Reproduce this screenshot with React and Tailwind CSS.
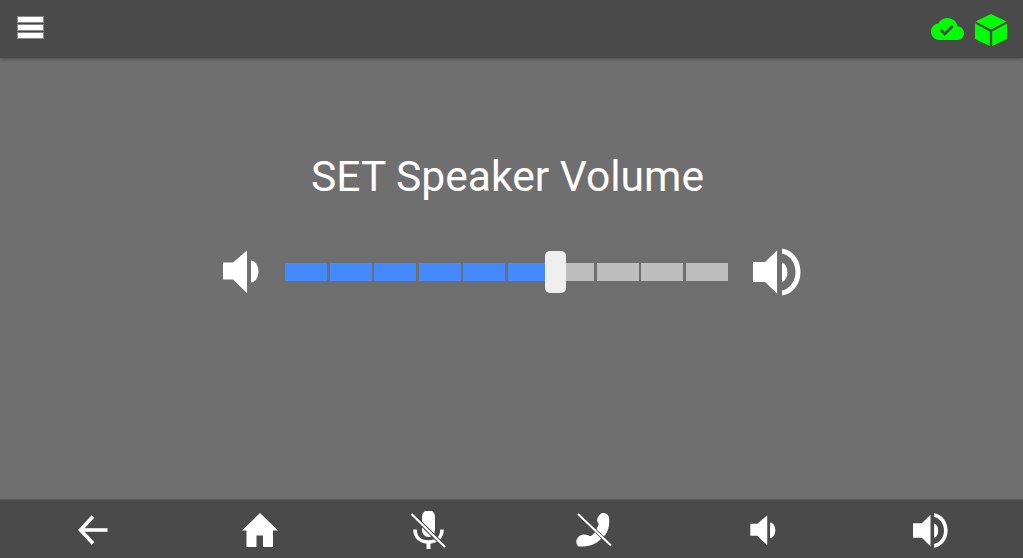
const Speaker = ({ className }) => (
  <svg viewBox="0 0 36 44" className={className} fill="white">
    <path d="M0 12.5H10L24 0.5V43L10 29.5H0Z" />
    <path d="M28 10.5A7.5 11 0 0 1 28 32.5Z" />
  </svg>
);

const SpeakerLoud = ({ className }) => (
  <svg viewBox="0 0 48 48" className={className} fill="white">
    <path d="M0 14H12L24 2.5V45.5L12 34H0Z" />
    <path d="M29 14.5A7 10 0 0 1 29 34Z" />
    <path d="M29 0.5C40 2 47.5 12 47.5 24S40 46 29 47.5V42.5C37 41 42.5 33 42.5 24S37 7 29 5.5Z" />
  </svg>
);

const Arrow = () => (
  <svg viewBox="0 0 30 30" className="w-[30px] h-[30px]" fill="none" stroke="white" strokeWidth="3.6">
    <path d="M29.5 15H3" />
    <path d="M15 1.5L2.5 15L15 28.5" />
  </svg>
);

const Home = () => (
  <svg viewBox="0 0 36 34" className="w-[36px] h-[34px]" fill="white">
    <path d="M18 0L36 17.5H31V34H21V22.5H14.5V34H4.5V17.5H0Z" />
  </svg>
);

const MicOff = () => (
  <svg viewBox="0 0 36 38" className="w-[36px] h-[38px]" fill="none">
    <rect x="12" y="-1" width="13" height="27" rx="6.5" fill="white" />
    <path d="M5 18.5C5 26.5 10.5 31 18.5 31S32 26.5 32 18.5" stroke="white" strokeWidth="3.6" />
    <path d="M16.5 30H20.5V38H16.5Z" fill="white" />
    <path d="M1.5 3L35 36" stroke="#4a4a4a" strokeWidth="4.2" />
    <path d="M1.5 3L35 36" stroke="white" strokeWidth="2.2" />
  </svg>
);

const PhoneOff = () => (
  <svg viewBox="0 0 36 36" className="w-[36px] h-[36px]" fill="none">
    <path
      fill="white"
      d="M27 1C30 1 33 3 33 6C34 14 32 22 25 27C20 32 14 34 8 34.5L3 34.5C1 34 0 31 0.5 28C1.5 25 4 23 7 22.5L12 23C13 24 14 24 15 24C18 22 20 19 21.5 15C22 13 23 12.5 22.5 11.5C21 10 21 8 21.5 6C23 3 25 1 27 1Z"
    />
    <path d="M2 2L35 33.5" stroke="#4a4a4a" strokeWidth="3.6" />
    <path d="M2 2L35 33.5" stroke="white" strokeWidth="2" />
  </svg>
);

const Cloud = () => (
  <svg viewBox="0 4 24 16" className="w-[33px] h-[22px]" fill="#00ff00">
    <path d="M19.35 10.04C18.67 6.59 15.64 4 12 4 9.11 4 6.6 5.64 5.35 8.04 2.34 8.36 0 10.91 0 14c0 3.31 2.69 6 6 6h13c2.76 0 5-2.24 5-5 0-2.64-2.05-4.78-4.65-4.96zM10 17l-3.5-3.5 1.41-1.41L10 14.17 15.18 9l1.41 1.41L10 17z" />
  </svg>
);

const Cube = () => (
  <svg viewBox="0 0 32 32" className="w-[32px] h-[32px]" fill="#00ff00">
    <path d="M16 0L31.5 7.5L16 15.5L0.5 7.5Z" />
    <path d="M0 9.5L14.8 17.5V32L0 25Z" />
    <path d="M32 9.5L17.2 17.5V32L32 25Z" />
  </svg>
);

const segments = [true, true, true, true, true, true, false, false, false, false];

export default function App() {
  return (
    <div className="flex h-[558px] w-[1023px] flex-col overflow-hidden bg-[#6f6f6f] font-['Roboto',sans-serif] text-white">
      <header className="z-10 flex h-[58px] shrink-0 items-start justify-between bg-[#4a4a4a] pl-[18px] pr-[16px] shadow-[0_1px_3px_rgba(0,0,0,0.3)]">
        <div className="mt-[17px] flex w-[25px] flex-col gap-[3px]">
          <div className="h-[5px] bg-white ring-1 ring-[#8a8a8a]" />
          <div className="h-[5px] bg-white ring-1 ring-[#8a8a8a]" />
          <div className="h-[5px] bg-white ring-1 ring-[#8a8a8a]" />
        </div>
        <div className="mt-[14px] flex items-center gap-[11px]">
          <div className="mt-[-2px]"><Cloud /></div>
          <Cube />
        </div>
      </header>

      <main className="flex flex-1 flex-col">
        <h1 className="mt-[92px] pr-[8px] text-center text-[42.6px] font-normal leading-[52px]">SET Speaker Volume</h1>
        <div className="ml-[223px] mt-[46px] flex items-center">
          <Speaker className="h-[44px] w-[36px]" />
          <div className="relative ml-[26px] flex h-[18px] w-[443px] gap-[2.5px]">
            {segments.map((on, i) => (
              <div key={i} className={on ? "h-full flex-1 bg-[#4589ff]" : "h-full flex-1 bg-[#bdbdbd]"} />
            ))}
            <div className="absolute left-[260px] top-[-12px] h-[42px] w-[21px] rounded-[5px] bg-[#efefef]" />
          </div>
          <SpeakerLoud className="ml-[25px] h-[48px] w-[48px]" />
        </div>
      </main>

      <footer className="grid h-[58px] shrink-0 grid-cols-6 items-center bg-[#4a4a4a] px-[9px] pt-[2px] shadow-[0_-1px_1px_rgba(0,0,0,0.2)]">
        <div className="flex justify-center"><Arrow /></div>
        <div className="flex justify-center"><Home /></div>
        <div className="flex justify-center"><MicOff /></div>
        <div className="flex justify-center"><div className="-ml-[2px]"><PhoneOff /></div></div>
        <div className="flex justify-center"><Speaker className="h-[31px] w-[26px]" /></div>
        <div className="flex justify-center"><SpeakerLoud className="h-[35px] w-[35px]" /></div>
      </footer>
    </div>
  );
}
